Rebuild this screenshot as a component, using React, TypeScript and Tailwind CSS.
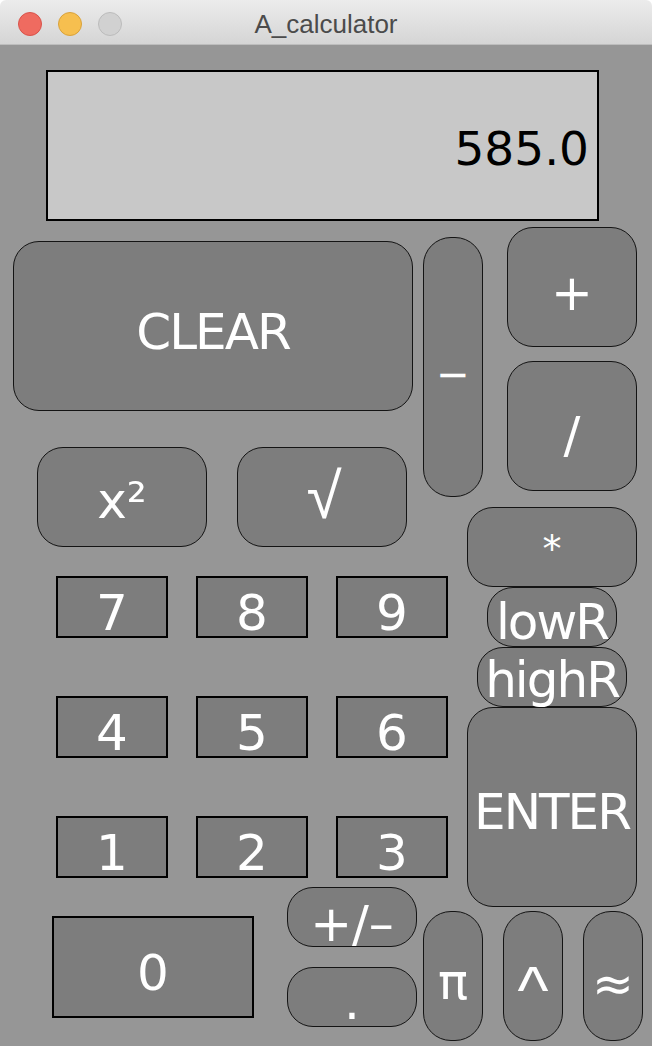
import React from "react";

// shared look of the rounded keys drawn on the sketch
const pill =
  "flex shrink-0 justify-center whitespace-nowrap bg-[#7d7d7d] text-white leading-none border-[1.5px] border-[#141414]";
const dv = "font-['DejaVu_Sans',sans-serif]";
const box =
  "flex shrink-0 justify-center border-2 border-black bg-[#7d7d7d] font-['DejaVu_Sans',sans-serif] text-[50px] leading-none text-white";

export default function App() {
  return (
    <div className="w-[652px] bg-white">
      {/* window title bar */}
      <div className="grid h-[45px] grid-cols-[1fr_auto_1fr] items-center rounded-t-[6px] border-b border-[#bdbdbd] bg-gradient-to-b from-[#ececec] to-[#d5d5d5] pt-[4px]">
        <div className="flex items-center gap-[16px] pl-[18px]">
          <span className="h-[24px] w-[24px] rounded-full border border-[#d9534b] bg-[#ef6b60]" />
          <span className="h-[24px] w-[24px] rounded-full border border-[#d9a23b] bg-[#f6bf4f]" />
          <span className="h-[24px] w-[24px] rounded-full border border-[#bcbcbc] bg-[#d1d1d1]" />
        </div>
        <div className="font-['Liberation_Sans',sans-serif] text-[26px] leading-none text-[#4b4b4b]">
          A_calculator
        </div>
        <div />
      </div>

      {/* sketch canvas */}
      <div className="flex h-[1001px] flex-col bg-[#969696] pt-[25px]">
        <div className="ml-[46px] flex h-[151px] w-[553px] justify-end border-2 border-black bg-[#c8c8c8] pr-[8px] pt-[53px] font-['DejaVu_Sans',sans-serif] text-[47px] leading-none text-black">
          585.0
        </div>

        <div className="mt-[6px] flex pl-[13px]">
          {/* left side: clear, functions, digits */}
          <div className="flex w-[410px] shrink-0 flex-col">
            <div className={`${pill} ${dv} mt-[14px] h-[170px] w-[400px] rounded-[26px] pt-[65px] text-[50px] tracking-[-2px]`}>
              CLEAR
            </div>
            <div className="mt-[36px] flex gap-[30px] pl-[24px]">
              <div className={`${pill} ${dv} h-[100px] w-[170px] rounded-[26px] pt-[28px] text-[50px]`}>x²</div>
              <div className={`${pill} h-[100px] w-[170px] rounded-[26px] pl-[4px] pt-[16px] font-['Liberation_Sans',sans-serif] text-[64px]`}>
                √
              </div>
            </div>
            <div className="mt-[29px] grid grid-cols-[repeat(3,112px)] gap-x-[28px] gap-y-[58px] pl-[43px]">
              {["7", "8", "9", "4", "5", "6", "1", "2", "3"].map((d) => (
                <div key={d} className={`${box} h-[62px] pt-[10px]`}>
                  {d}
                </div>
              ))}
            </div>
            <div className="mt-[9px] flex items-start pl-[39px]">
              <div className={`${box} mt-[29px] h-[102px] w-[202px] pt-[30px]`}>0</div>
              <div className="ml-[33px] flex flex-col gap-[20px]">
                <div className={`${pill} ${dv} h-[60px] w-[130px] rounded-[26px] pt-[11px] text-[50px]`}>+/–</div>
                <div className={`${pill} ${dv} h-[60px] w-[130px] rounded-[26px] pt-[9px] text-[50px]`}>.</div>
              </div>
            </div>
          </div>

          {/* right side: operators, range, enter */}
          <div className="flex w-[220px] shrink-0 flex-col">
            <div className="flex items-start">
              <div className={`${pill} ${dv} mt-[10px] h-[260px] w-[60px] rounded-[28px] pt-[116px] text-[40px]`}>
                −
              </div>
              <div className="ml-[24px] flex flex-col gap-[14px]">
                <div className={`${pill} ${dv} h-[120px] w-[130px] rounded-[26px] pt-[40px] text-[50px]`}>+</div>
                <div className={`${pill} ${dv} h-[130px] w-[130px] rounded-[26px] pt-[48px] text-[50px]`}>/</div>
              </div>
            </div>
            <div className="ml-[44px] mt-[10px] flex w-[170px] flex-col items-center">
              <div className={`${pill} ${dv} h-[80px] w-[170px] rounded-[26px] pt-[22px] text-[38px]`}>*</div>
              <div className={`${pill} ${dv} h-[60px] w-[130px] rounded-[26px] pt-[9px] text-[50px] tracking-[-2px]`}>lowR</div>
              <div className={`${pill} ${dv} h-[60px] w-[150px] rounded-[26px] pt-[7px] text-[50px] tracking-[-2px]`}>highR</div>
              <div className={`${pill} ${dv} h-[200px] w-[170px] rounded-[26px] pt-[79px] text-[50px] tracking-[-2px]`}>ENTER</div>
            </div>
            <div className="mt-[4px] flex gap-[20px]">
              <div className={`${pill} ${dv} h-[130px] w-[60px] rounded-[28px] pt-[45px] text-[50px]`}>π</div>
              <div className={`${pill} h-[130px] w-[60px] rounded-[28px] pt-[45px] font-['Liberation_Sans',sans-serif] text-[66px]`}>
                ^
              </div>
              <div className={`${pill} ${dv} h-[130px] w-[60px] rounded-[28px] pt-[47px] text-[50px]`}>≈</div>
            </div>
          </div>
        </div>
      </div>
    </div>
  );
}
